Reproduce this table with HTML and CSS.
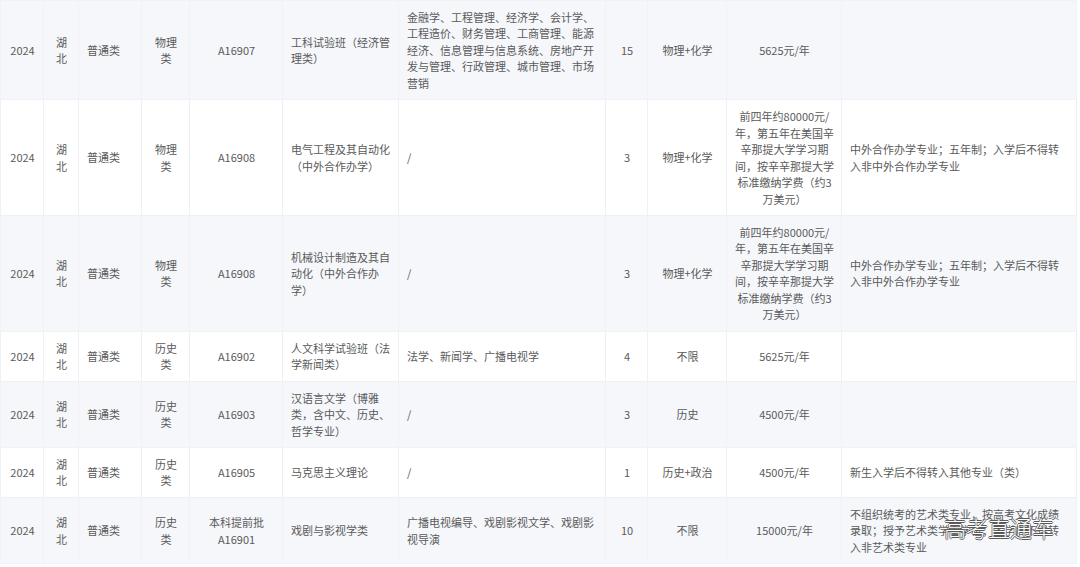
FILE: index.html
```html
<!DOCTYPE html>
<html lang="zh-CN">
<head>
<meta charset="utf-8">
<title>招生计划</title>
<link rel="stylesheet" href="styles.css">
</head>
<body>
<div class="page">
<table class="tbl">
<colgroup>
<col class="w-year"><col class="w-prov"><col class="w-type"><col class="w-sub"><col class="w-code"><col class="w-name"><col class="w-inc"><col class="w-num"><col class="w-sel"><col class="w-fee"><col class="w-note">
</colgroup>
<tbody>
<tr class="alt">
<td class="c">2024</td><td class="c">湖北</td><td>普通类</td><td class="c">物理类</td><td class="c">A16907</td><td>工科试验班（经济管理类）</td><td>金融学、工程管理、经济学、会计学、工程造价、财务管理、工商管理、能源经济、信息管理与信息系统、房地产开发与管理、行政管理、城市管理、市场营销</td><td class="c">15</td><td class="c">物理+化学</td><td class="c">5625元/年</td><td class="note"></td>
</tr>
<tr>
<td class="c">2024</td><td class="c">湖北</td><td>普通类</td><td class="c">物理类</td><td class="c">A16908</td><td>电气工程及其自动化（中外合作办学）</td><td>/</td><td class="c">3</td><td class="c">物理+化学</td><td class="c">前四年约80000元/年，第五年在美国辛辛那提大学学习期间，按辛辛那提大学标准缴纳学费（约3万美元）</td><td class="note">中外合作办学专业；五年制；入学后不得转入非中外合作办学专业</td>
</tr>
<tr class="alt">
<td class="c">2024</td><td class="c">湖北</td><td>普通类</td><td class="c">物理类</td><td class="c">A16908</td><td>机械设计制造及其自动化（中外合作办学）</td><td>/</td><td class="c">3</td><td class="c">物理+化学</td><td class="c">前四年约80000元/年，第五年在美国辛辛那提大学学习期间，按辛辛那提大学标准缴纳学费（约3万美元）</td><td class="note">中外合作办学专业；五年制；入学后不得转入非中外合作办学专业</td>
</tr>
<tr>
<td class="c">2024</td><td class="c">湖北</td><td>普通类</td><td class="c">历史类</td><td class="c">A16902</td><td>人文科学试验班（法学新闻类）</td><td>法学、新闻学、广播电视学</td><td class="c">4</td><td class="c">不限</td><td class="c">5625元/年</td><td class="note"></td>
</tr>
<tr class="alt">
<td class="c">2024</td><td class="c">湖北</td><td>普通类</td><td class="c">历史类</td><td class="c">A16903</td><td>汉语言文学（博雅类，含中文、历史、哲学专业）</td><td>/</td><td class="c">3</td><td class="c">历史</td><td class="c">4500元/年</td><td class="note"></td>
</tr>
<tr>
<td class="c">2024</td><td class="c">湖北</td><td>普通类</td><td class="c">历史类</td><td class="c">A16905</td><td>马克思主义理论</td><td>/</td><td class="c">1</td><td class="c">历史+政治</td><td class="c">4500元/年</td><td class="note">新生入学后不得转入其他专业（类）</td>
</tr>
<tr class="alt">
<td class="c">2024</td><td class="c">湖北</td><td>普通类</td><td class="c">历史类</td><td class="c">本科提前批A16901</td><td>戏剧与影视学类</td><td>广播电视编导、戏剧影视文学、戏剧影视导演</td><td class="c">10</td><td class="c">不限</td><td class="c">15000元/年</td><td class="note">不组织统考的艺术类专业，按高考文化成绩录取；授予艺术类学士学位；入学后不得转入非艺术类专业</td>
</tr>
</tbody>
</table>
<div class="watermark">高考直通车</div>
</div>
</body>
</html>
```

FILE: styles.css
```css
html, body {
  margin: 0;
  padding: 0;
  background: #ffffff;
}

.page {
  position: relative;
  width: 1080px;
  height: 567px;
  overflow: hidden;
  font-family: "Noto Sans CJK SC", "Noto Sans", sans-serif;
}

.tbl {
  border-collapse: collapse;
  table-layout: fixed;
  width: 1076px;
  font-size: 11px;
  line-height: 16.45px;
  color: #5a5a5a;
}

.w-year { width: 43px; }
.w-prov { width: 35px; }
.w-type { width: 63px; }
.w-sub { width: 48px; }
.w-code { width: 93px; }
.w-name { width: 116px; }
.w-inc { width: 207px; }
.w-num { width: 42px; }
.w-sel { width: 79px; }
.w-fee { width: 115px; }
.w-note { width: 235px; }

.tbl td {
  border: 1px solid #eef0f3;
  padding: 8px 7px 8px 8px;
  vertical-align: middle;
  text-align: left;
  word-break: normal;
}

.tbl tr.alt td {
  background: #f5f7fa;
  border-color: #f1f2f5;
}

.tbl td.c {
  text-align: center;
}

.tbl td.note {
  padding-right: 12px;
}

.watermark {
  position: absolute;
  left: 944px;
  top: 516px;
  font-size: 22px;
  line-height: 22px;
  font-weight: 300;
  color: #ffffff;
  text-shadow: 0.7px 0 0 #5a5a5a, -0.7px 0 0 #5a5a5a, 0 0.7px 0 #5a5a5a, 0 -0.7px 0 #5a5a5a;
  white-space: nowrap;
}
```
